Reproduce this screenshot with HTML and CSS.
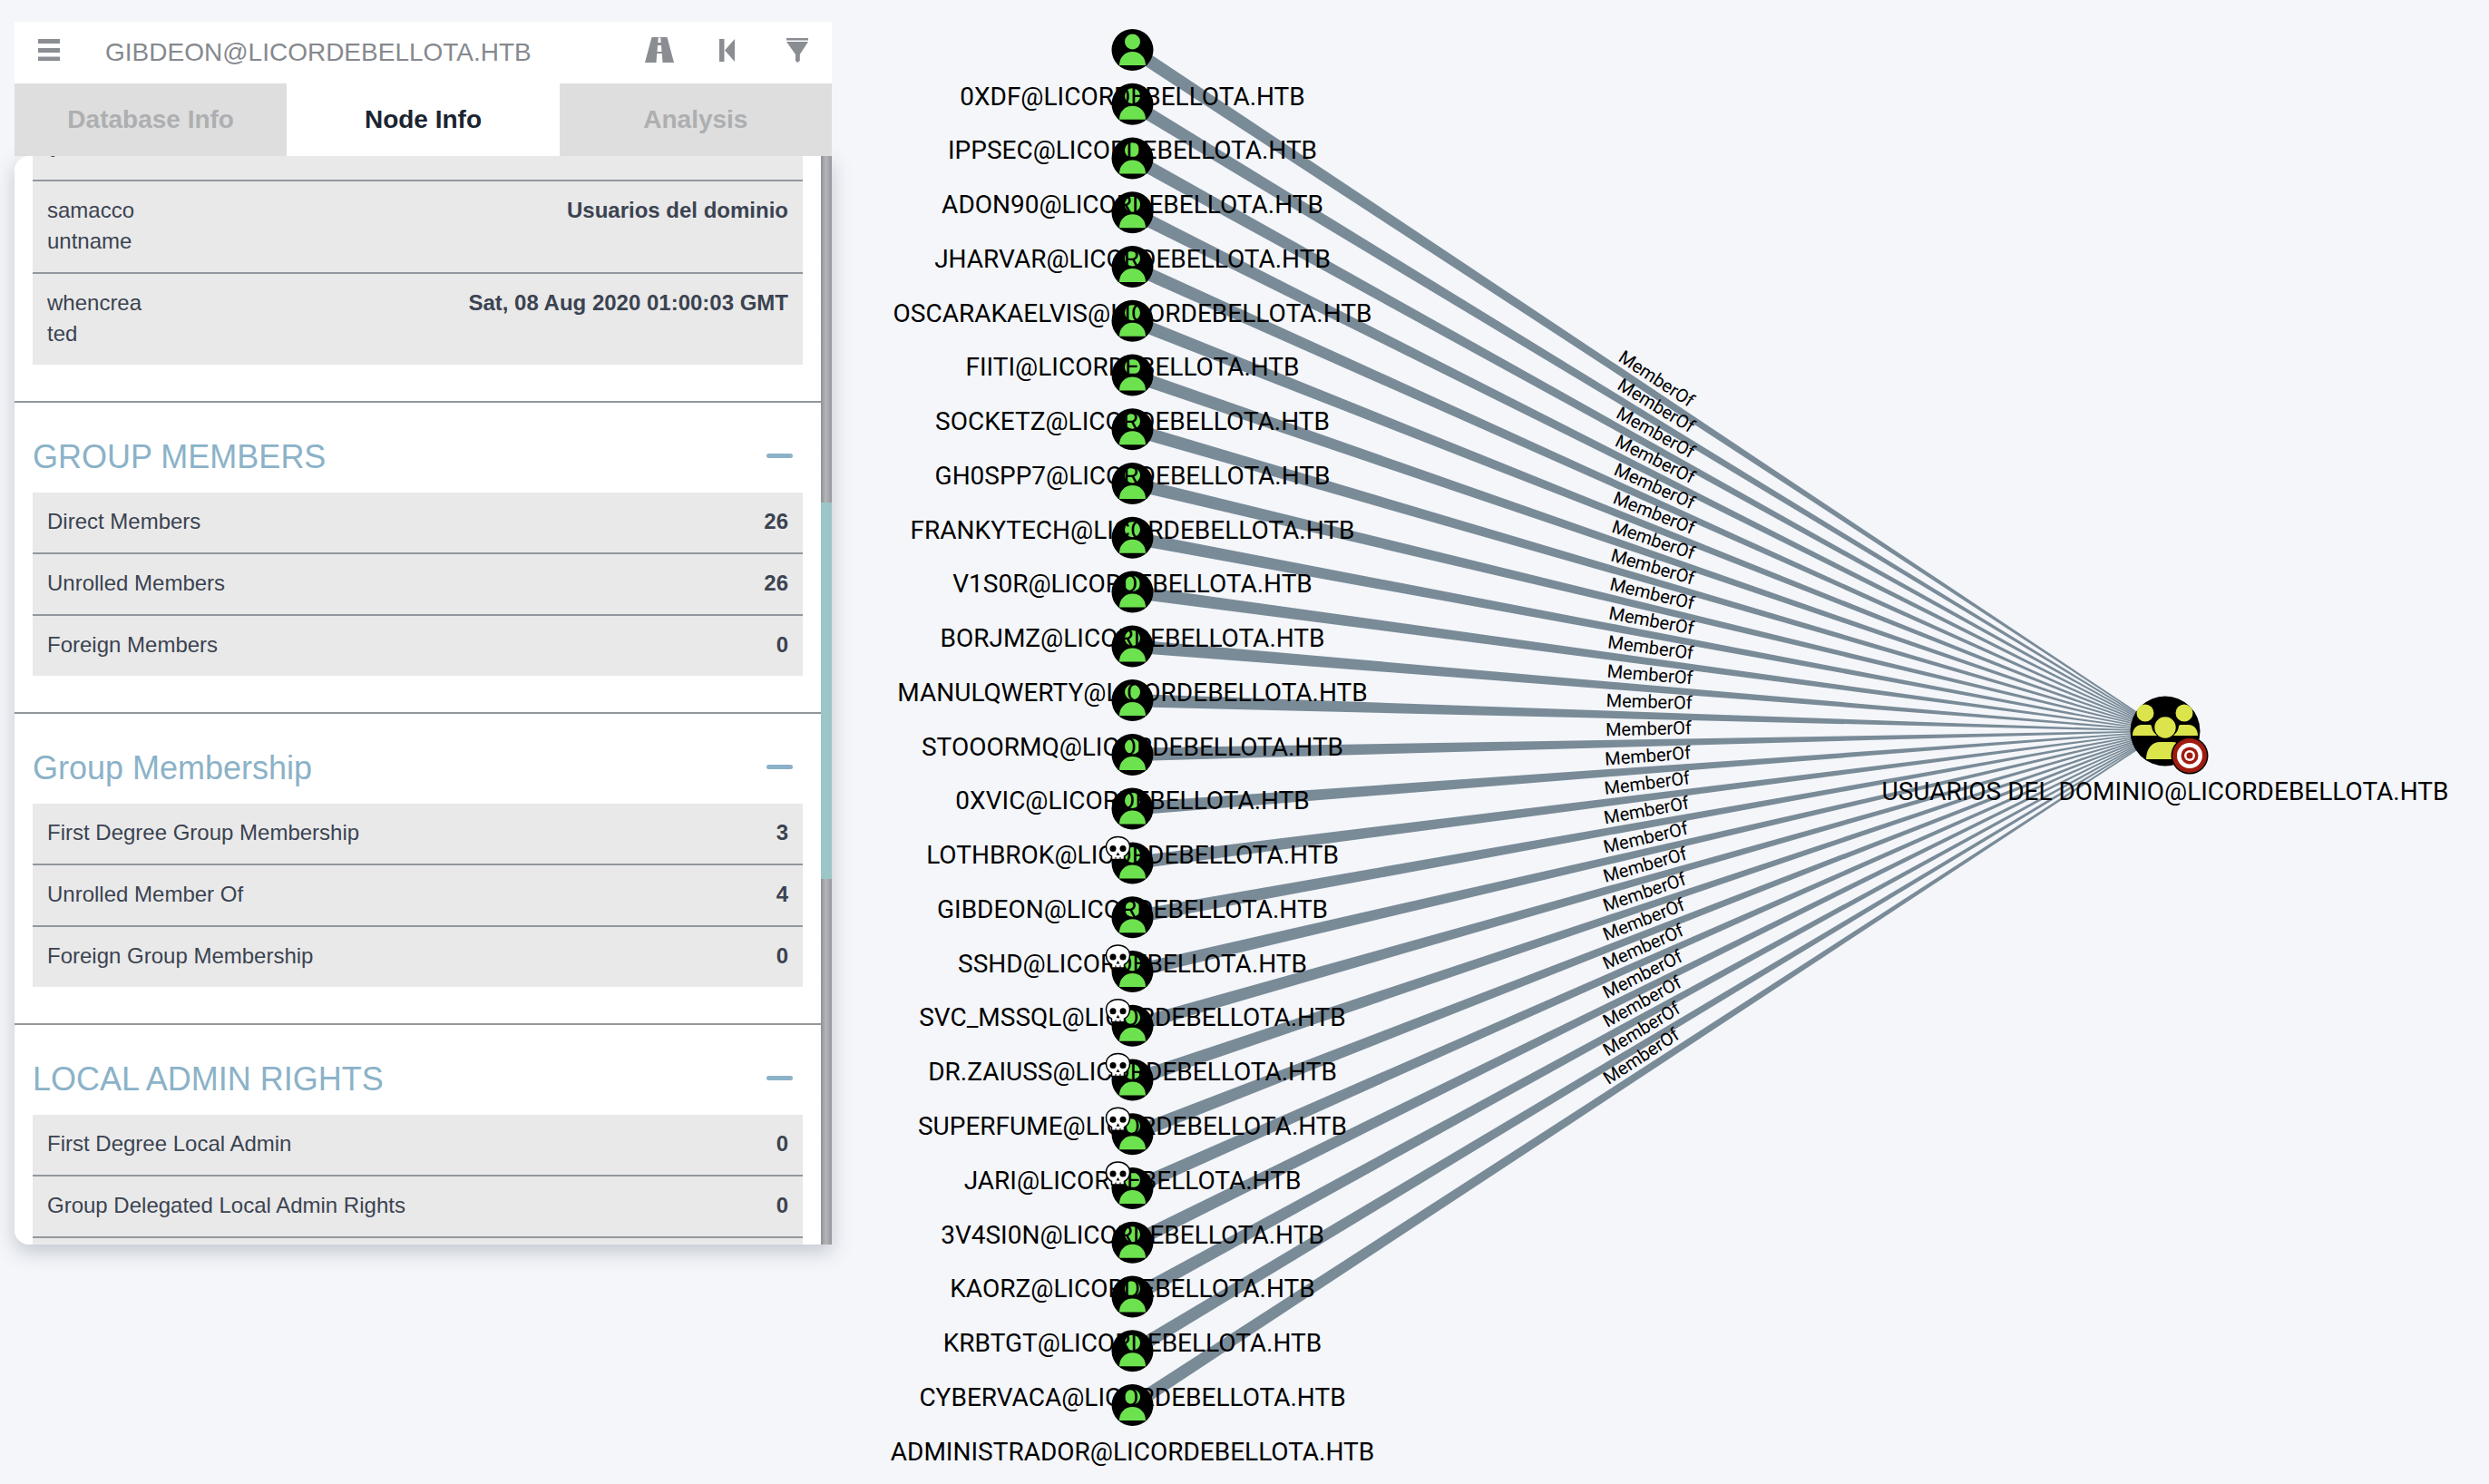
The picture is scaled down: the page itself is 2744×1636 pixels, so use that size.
FILE: index.html
```html
<!DOCTYPE html>
<html lang="en">
<head>
<meta charset="utf-8">
<title>BloodHound</title>
<link rel="stylesheet" href="styles.css">
</head>
<body>
<main class="stage">
  <svg id="graph" class="graph" width="2744" height="1636" viewBox="0 0 2744 1636"></svg>
  <section class="panel">
    <header class="searchbar">
      <svg class="icon-menu" width="24" height="24" viewBox="0 0 24 24"><rect y="0" width="24" height="5"/><rect y="10" width="24" height="5"/><rect y="19.500" width="24" height="5"/></svg>
      <span class="search-title">GIBDEON@LICORDEBELLOTA.HTB</span>
      <svg class="icon-road" width="32" height="28" viewBox="0 0 32 28"><path fill-rule="evenodd" d="M7.500 0H24.500L32 28H0ZM14.800 0.500H17.200L17.700 6H14.300ZM14 9H18L18.500 16H13.500ZM13.200 18H18.800L19.500 28H12.500Z"/></svg>
      <svg class="icon-back" width="17" height="25" viewBox="0 0 17 25"><path d="M0 0H5.500V25H0ZM17 0V25L6 12.500Z"/></svg>
      <svg class="icon-filter" width="24" height="27" viewBox="0 0 24 27"><path d="M0 0H24V2.500H0ZM0 4H24L14.800 18V25L12 27L10 25V18Z"/></svg>
    </header>
    <nav class="tabs">
      <div class="tab">Database Info</div>
      <div class="tab tab-active">Node Info</div>
      <div class="tab">Analysis</div>
    </nav>
    <div class="scroller">
      <div class="content">
        <div class="props">
          <div class="row row-cut"><span class="cut-text">ty</span></div>
          <div class="row row-prop"><span class="prop-name">samaccountname</span><span class="value">Usuarios del dominio</span></div>
          <div class="row row-prop"><span class="prop-name">whencreated</span><span class="value">Sat, 08 Aug 2020 01:00:03 GMT</span></div>
        </div>
        <section class="group">
          <div class="group-head"><h3>GROUP MEMBERS</h3><span class="minus"></span></div>
          <div class="row"><span>Direct Members</span><span class="value">26</span></div>
          <div class="row"><span>Unrolled Members</span><span class="value">26</span></div>
          <div class="row"><span>Foreign Members</span><span class="value">0</span></div>
        </section>
        <section class="group">
          <div class="group-head"><h3>Group Membership</h3><span class="minus"></span></div>
          <div class="row"><span>First Degree Group Membership</span><span class="value">3</span></div>
          <div class="row"><span>Unrolled Member Of</span><span class="value">4</span></div>
          <div class="row"><span>Foreign Group Membership</span><span class="value">0</span></div>
        </section>
        <section class="group">
          <div class="group-head"><h3>LOCAL ADMIN RIGHTS</h3><span class="minus"></span></div>
          <div class="row"><span>First Degree Local Admin</span><span class="value">0</span></div>
          <div class="row"><span>Group Delegated Local Admin Rights</span><span class="value">0</span></div>
          <div class="row row-stub"></div>
        </section>
      </div>
      <div class="track"><div class="thumb"></div></div>
    </div>
  </section>
</main>
<script src="graph.js"></script>
</body>
</html>
```

FILE: styles.css
```css
* { box-sizing: border-box; }
html, body { margin: 0; padding: 0; }
body {
  width: 2744px;
  height: 1636px;
  overflow: hidden;
  background: #f4f6fa;
  font-family: "Liberation Sans", Arial, sans-serif;
  color: #3b4351;
}
.stage { position: relative; width: 2744px; height: 1636px; padding: 24px 0 0 16px; }
.graph { position: absolute; left: 0; top: 0; }
.panel { position: relative; width: 901px; }

.searchbar {
  display: flex;
  align-items: center;
  height: 68px;
  background: #fff;
  fill: #8a8d91;
}
.icon-menu { margin: 0 0 6px 26px; flex: none; }
.search-title { margin-left: 50px; font-size: 28px; color: #85898e; flex: 1; }
.icon-road { margin: 0 0 6px 0; flex: none; }
.icon-back { margin: 0 0 5px 50px; flex: none; }
.icon-filter { margin: 0 26px 6px 57px; flex: none; }

.tabs { display: flex; height: 80px; }
.tab {
  flex: 1;
  display: flex;
  align-items: center;
  justify-content: center;
  background: #dedede;
  color: #adafb1;
  font-size: 28px;
  font-weight: 700;
}
.tab-active { background: #fff; color: #1b2431; }

.scroller {
  display: flex;
  height: 1200px;
  border-radius: 16px 0 0 16px;
  background: #fff;
  box-shadow: 0 8px 22px rgba(70, 80, 95, 0.28);
  overflow: hidden;
}
.content { flex: 1; min-width: 0; overflow: hidden; background: #fff; border-radius: 16px 0 6px 16px; }
.track {
  flex: none;
  width: 12px;
  background: linear-gradient(90deg, #8e9096, #b4b5b9 45%, #97989d);
}
.thumb { margin-top: 382px; height: 415px; background: #9cc5c8; }

.props { padding: 0 20px 40px; }
.group { border-top: 2px solid #92979c; padding: 0 20px 40px; }
.group:last-child { padding-bottom: 0; }
.group-head {
  display: flex;
  align-items: center;
  justify-content: space-between;
  height: 99px;
  padding: 0 11px 0 0;
}
h3 { margin: 21px 0 0; font-size: 36px; font-weight: 400; color: #8bb2c8; }
.minus { width: 29px; height: 5px; border-radius: 3px; background: #8bb2c8; margin-top: 18px; }

.row {
  display: flex;
  justify-content: space-between;
  padding: 15px 16px 17px;
  min-height: 68px;
  background: #e9e9e9;
  border-bottom: 2px solid #92979c;
  font-size: 24px;
  line-height: 34px;
}
.row:last-child { border-bottom: 0; min-height: 66px; }
.value { font-weight: 700; text-align: right; }
.prop-name { width: 105px; word-break: break-all; }
.row-cut { min-height: 0; height: 28px; padding: 0 16px; overflow: hidden; }
.cut-text { margin: -29px 0 0 -3px; }
.row-prop { height: 102px; }
.row-prop:last-child { height: 100px; }
.row-stub { min-height: 0; height: 20px; padding: 0; }
.group .row-stub:last-child { min-height: 0; }

.edge { fill: #7a8b98; }
.edge-label { font-family: Roboto, sans-serif; font-size: 20px; fill: #000; text-anchor: middle; }
.node-disc { fill: #000; }
.user-icon { fill: #6de24f; }
.group-icon { fill: #dbe44b; }
.node-label { font-family: Roboto, sans-serif; font-size: 28px; fill: #000; text-anchor: middle; }
.badge-black { fill: #000; }
.badge-red { fill: #a01c10; }
.badge-white { fill: #fff; }
.skull { fill: #fff; stroke: #000; stroke-width: 1.5; }
.skull-hole { fill: #000; }
```

FILE: graph.js
```js
(function () {
  var NS = 'http://www.w3.org/2000/svg';
  var svg = document.getElementById('graph');
  var names = ['0XDF', 'IPPSEC', 'ADON90', 'JHARVAR', 'OSCARAKAELVIS', 'FIITI', 'SOCKETZ', 'GH0SPP7',
    'FRANKYTECH', 'V1S0R', 'BORJMZ', 'MANULQWERTY', 'STOOORMQ', '0XVIC', 'LOTHBROK', 'GIBDEON', 'SSHD',
    'SVC_MSSQL', 'DR.ZAIUSS', 'SUPERFUME', 'JARI', '3V4SI0N', 'KAORZ', 'KRBTGT', 'CYBERVACA', 'ADMINISTRADOR'];
  var skulls = { 15: 1, 17: 1, 18: 1, 19: 1, 20: 1, 21: 1 };
  var X0 = 1248.5, Y0 = 55, STEP = 59.76, TX = 2387, TY = 806;

  function el(name, attrs, parent, text) {
    var e = document.createElementNS(NS, name);
    for (var k in attrs) e.setAttribute(k, attrs[k]);
    if (text) e.textContent = text;
    (parent || svg).appendChild(e);
    return e;
  }

  var nodes = names.map(function (n, i) { return { name: n, i: i, x: X0, y: Y0 + STEP * i }; });

  nodes.forEach(function (n) {
    var dx = TX - n.x, dy = TY - n.y, len = Math.sqrt(dx * dx + dy * dy);
    var nx = -dy / len, ny = dx / len, a = 7.2, b = 0.6;
    var pts = [
      [n.x + nx * a, n.y + ny * a], [TX + nx * b, TY + ny * b],
      [TX - nx * b, TY - ny * b], [n.x - nx * a, n.y - ny * a]
    ].map(function (p) { return p[0].toFixed(1) + ',' + p[1].toFixed(1); }).join(' ');
    el('polygon', { 'class': 'edge', points: pts });
  });

  nodes.forEach(function (n) {
    var dx = TX - n.x, dy = TY - n.y, ang = Math.atan2(dy, dx) * 180 / Math.PI;
    var len = Math.sqrt(dx * dx + dy * dy);
    var mx = (n.x + TX) / 2 + (dy / len) * 8.7, my = (n.y + TY) / 2 - (dx / len) * 8.7;
    el('text', { 'class': 'edge-label', x: 0, y: 0, transform: 'translate(' + mx.toFixed(1) + ' ' + my.toFixed(1) + ') rotate(' + ang.toFixed(2) + ')' }, svg, 'MemberOf');
  });

  nodes.forEach(function (n) {
    var g = el('g', { transform: 'translate(' + n.x + ' ' + n.y.toFixed(1) + ')' });
    el('circle', { 'class': 'node-disc', r: 23 }, g);
    el('circle', { 'class': 'user-icon', cy: -9, r: 8.5 }, g);
    el('path', { 'class': 'user-icon', d: 'M-14.500 17C-14.500 8 -8 2 0 2C8 2 14.500 8 14.500 17Z' }, g);
  });

  var t = el('g', { transform: 'translate(' + TX + ' ' + TY + ')' });
  el('circle', { 'class': 'node-disc', r: 38.500 }, t);
  el('circle', { 'class': 'group-icon', cx: -22, cy: -20, r: 9.500 }, t);
  el('circle', { 'class': 'group-icon', cx: 21, cy: -20, r: 9.500 }, t);
  el('circle', { 'class': 'group-icon', cx: 0, cy: -4, r: 11.700 }, t);
  el('path', { 'class': 'group-icon', d: 'M-36 5C-36 -3 -31 -7 -26 -7H-17C-15 -7 -15 -5 -14.500 -3C-14 0 -11 3 -9 5Z' }, t);
  el('path', { 'class': 'group-icon', d: 'M36 5C36 -3 31 -7 26 -7H17C15 -7 15 -5 14.500 -3C14 0 11 3 9 5Z' }, t);
  el('path', { 'class': 'group-icon', d: 'M-21 31C-21 19 -14 12 -6 12H8C16 12 21 19 21 31Z' }, t);
  var b = el('g', { transform: 'translate(27 27)' }, t);
  el('circle', { 'class': 'badge-black', r: 20.500 }, b);
  el('circle', { 'class': 'badge-red', r: 19 }, b);
  el('circle', { 'class': 'badge-white', r: 14 }, b);
  el('circle', { 'class': 'badge-red', r: 9.500 }, b);
  el('circle', { 'class': 'badge-white', r: 6 }, b);
  el('circle', { 'class': 'badge-red', r: 3.500 }, b);

  nodes.forEach(function (n) {
    el('text', { 'class': 'node-label', x: n.x, y: (n.y + 60.5).toFixed(1) }, svg, n.name + '@LICORDEBELLOTA.HTB');
  });
  el('text', { 'class': 'node-label', x: TX, y: TY + 76 }, svg, 'USUARIOS DEL DOMINIO@LICORDEBELLOTA.HTB');

  nodes.forEach(function (n) {
    if (!skulls[n.i]) return;
    var g = el('g', { transform: 'translate(' + (n.x - 16) + ' ' + (n.y - 16).toFixed(1) + ')' });
    el('path', { 'class': 'skull', d: 'M-7 12V8.500C-10.500 6.500 -13 3 -13 -2C-13 -8.500 -7 -13 0 -13C7 -13 13 -8.500 13 -2C13 3 10.500 6.500 7 8.500V12Z' }, g);
    el('circle', { 'class': 'skull-hole', cx: -5.500, cy: 0, r: 3.500 }, g);
    el('circle', { 'class': 'skull-hole', cx: 5.500, cy: 0, r: 3.500 }, g);
    el('path', { 'class': 'skull-hole', d: 'M0 4L2 7.500H-2Z' }, g);
    el('rect', { 'class': 'skull-hole', x: -3, y: 9.500, width: 1, height: 2.500 }, g);
    el('rect', { 'class': 'skull-hole', x: 2, y: 9.500, width: 1, height: 2.500 }, g);
  });
})();
```
